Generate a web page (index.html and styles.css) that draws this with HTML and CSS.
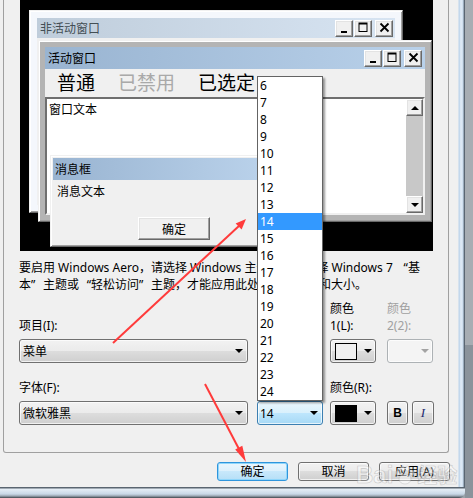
FILE: index.html
```html
<!DOCTYPE html>
<html lang="zh-CN">
<head>
<meta charset="utf-8">
<title>窗口颜色和外观</title>
<link rel="stylesheet" href="styles.css">
</head>
<body>
<div class="screen">
  <div class="window">
    <div class="client">
      <div class="panel">
        <div class="preview">
          <div class="win inactive">
            <div class="caption">
              <span class="cap-title">非活动窗口</span>
              <span class="capbtns">
                <span class="capbtn"><svg width="16" height="15" viewBox="0 0 16 15"><rect x="5" y="10" width="6" height="2"/></svg></span>
                <span class="capbtn"><svg width="16" height="15" viewBox="0 0 16 15"><path fill-rule="evenodd" d="M3.5 1.5h9v9.5h-9z M4.5 3.5v6.5h7V3.5z"/></svg></span>
                <span class="capbtn close"><svg width="16" height="15" viewBox="0 0 16 15"><path d="M4.5 2.5l8 8M12.5 2.5l-8 8" stroke="#000" stroke-width="1.8" fill="none"/></svg></span>
              </span>
            </div>
            <div class="win-body"></div>
          </div>

          <div class="win active">
            <div class="caption">
              <span class="cap-title">活动窗口</span>
              <span class="capbtns">
                <span class="capbtn"><svg width="16" height="15" viewBox="0 0 16 15"><rect x="5" y="10" width="6" height="2"/></svg></span>
                <span class="capbtn"><svg width="16" height="15" viewBox="0 0 16 15"><path fill-rule="evenodd" d="M3.5 1.5h9v9.5h-9z M4.5 3.5v6.5h7V3.5z"/></svg></span>
                <span class="capbtn close"><svg width="16" height="15" viewBox="0 0 16 15"><path d="M4.5 2.5l8 8M12.5 2.5l-8 8" stroke="#000" stroke-width="1.8" fill="none"/></svg></span>
              </span>
            </div>
            <div class="menubar">
              <span>普通</span><span class="dis">已禁用</span><span>已选定</span>
            </div>
            <div class="textarea">
              <div class="ta-text">窗口文本</div>
              <div class="vscroll">
                <div class="sbbtn"><span class="tri-up"></span></div>
                <div class="sbtrack"></div>
                <div class="sbbtn"><span class="tri-down"></span></div>
              </div>
            </div>
          </div>

          <div class="win msgbox">
            <div class="caption"><span class="cap-title">消息框</span></div>
            <div class="msg-body">
              <div class="msg-text">消息文本</div>
              <div class="msg-btn">确定</div>
            </div>
          </div>
        </div>

        <p class="note">要启用 Windows Aero，请选择 Windows 主题。仅当选择 Windows 7 <span class="q qo">“</span>基<br>本<span class="q qc">”</span>主题或<span class="q qo">“</span>轻松访问<span class="q qc">”</span>主题，才能应用此处选择的颜色和大小。</p>

        <div class="form">
          <div class="lbl">项目(I):</div>
          <div></div>
          <div class="lbl">颜色<br>1(L):</div>
          <div class="lbl dis">颜色<br>2(2):</div>

          <div class="combo aero wide"><span>菜单</span><span class="arrow"></span></div>
          <div class="combo aero narrow"><span></span><span class="arrow"></span></div>
          <div class="colorbtn aero"><span class="swatch light"></span><span class="arrow"></span></div>
          <div class="colorbtn aero disabled"><span class="swatch none"></span><span class="arrow"></span></div>

          <div class="lbl">字体(F):</div>
          <div></div>
          <div class="lbl">颜色(R):</div>
          <div></div>

          <div class="combo aero wide"><span>微软雅黑</span><span class="arrow"></span></div>
          <div class="combo aero narrow hot"><span>14</span><span class="arrow"></span></div>
          <div class="colorbtn aero"><span class="swatch dark"></span><span class="arrow"></span></div>
          <div class="style-btns">
            <div class="stybtn aero bold">B</div>
            <div class="stybtn aero ital">I</div>
          </div>
        </div>
      </div>

      <div class="buttons">
        <button class="btn aero default">确定</button>
        <button class="btn aero">取消</button>
        <button class="btn aero">应用(A)</button>
      </div>
    </div>
    <div class="frame-r"></div>
    <div class="frame-b"></div>
  </div>
  <div class="outside"></div>

  <div class="droplist">
    <div>6</div><div>7</div><div>8</div><div>9</div><div>10</div><div>11</div><div>12</div><div>13</div>
    <div class="sel">14</div>
    <div>15</div><div>16</div><div>17</div><div>18</div><div>19</div><div>20</div><div>21</div><div>22</div><div>23</div><div>24</div>
  </div>

  <div class="watermark"><span class="wm-bai">Bai</span><svg class="wm-paw" width="22" height="22" viewBox="0 0 22 22"><ellipse cx="11" cy="15" rx="6" ry="5"/><circle cx="4" cy="9" r="2.4"/><circle cx="8.5" cy="4.5" r="2.4"/><circle cx="13.5" cy="4.5" r="2.4"/><circle cx="18" cy="9" r="2.4"/></svg><span class="wm-jy">经验</span></div>

  <svg class="arrows" width="473" height="498" viewBox="0 0 473 498">
    <line x1="113" y1="343" x2="240" y2="225" stroke="#ff3b3b" stroke-width="2"/>
    <polygon points="246,219 241.6,229.5 235.6,223.4" fill="#ff3b3b"/>
    <line x1="205" y1="384" x2="240" y2="451" stroke="#ff3b3b" stroke-width="2"/>
    <polygon points="246,462 242.3,445.8 235.2,449.6" fill="#ff3b3b"/>
  </svg>
</div>
</body>
</html>
```

FILE: styles.css
```css
* { box-sizing: border-box; }
html, body { margin: 0; padding: 0; }
body {
  width: 473px;
  height: 498px;
  overflow: hidden;
  font-family: "Noto Sans", "Noto Sans CJK SC", sans-serif;
  font-size: 12px;
  color: #000;
  background: #9ba2a9;
}
.screen { position: relative; width: 473px; height: 498px; display: flex; }

.window {
  width: 465px;
  height: 498px;
  display: grid;
  grid-template-columns: 458px 7px;
  grid-template-rows: 487px 11px;
  flex: none;
}
.client { background: #f0f0f0; display: flex; flex-direction: column; }
.frame-r {
  background: linear-gradient(90deg, #f4f4f4 0, #b8d0e8 1px, #e4eef8 3px, #c8daec 5px, #6f7d8b 6px, #46505a 7px);
}
.frame-b {
  grid-column: 1 / 3;
  border-bottom-right-radius: 6px;
  background: linear-gradient(180deg, #5a6570 0, #5a6570 1px, #e6eef6 2px, #c9d8e7 7px, #9aa6b2 9px, #3e444a 11px);
}
.outside { flex: 1; background: linear-gradient(180deg, #a7adb3 0, #a7adb3 345px, #8b939b 345px); }

/* main bordered panel */
.panel {
  margin-left: 3px;
  width: 446px;
  height: 453px;
  border: 1px solid #a0a0a0;
  border-top: 0;
  border-radius: 0 0 3px 3px;
  padding-left: 15px;
}
.preview {
  margin-left: 1px;
  width: 413px;
  height: 251px;
  background: #000;
  position: relative;
  overflow: hidden;
}

/* classic preview windows */
.win {
  position: absolute;
  display: flex;
  flex-direction: column;
  border: 1px solid;
  border-color: #f0f0f0 #696969 #696969 #f0f0f0;
  box-shadow: inset 1px 1px 0 #fff, inset -1px -1px 0 #a0a0a0;
}
.inactive { left: 9px; top: 10px; width: 374px; height: 203px; padding: 7px; background: #f4f7fc; }
.active { left: 18px; top: 40px; width: 394px; height: 182px; padding: 6px; background: #b4b4b4; }
.msgbox { left: 30px; top: 155px; width: 212px; height: 92px; padding: 2px; background: #f0f0f0; }

.caption { display: flex; align-items: center; padding-left: 3px; padding-right: 2px; flex: none; }
.inactive .caption { height: 20px; background: linear-gradient(90deg, #bfcddb, #d7e4f2); color: #434e54; }
.active .caption { height: 22px; padding-right: 3px; background: linear-gradient(90deg, #99b4d1, #b9d1ea); }
.msgbox .caption { height: 22px; padding-left: 2px; background: linear-gradient(90deg, #99b4d1, #b9d1ea); }
.cap-title { flex: 1; line-height: 17px; white-space: nowrap; }
.capbtns { display: flex; }
.capbtn {
  width: 18px;
  height: 17px;
  margin-left: 1px;
  background: #f0f0f0;
  border: 1px solid;
  border-color: #fff #696969 #696969 #fff;
  box-shadow: inset -1px -1px 0 #a0a0a0, inset 1px 1px 0 #e3e3e3;
}
.capbtn.close { margin-left: 3px; }
.capbtn svg { display: block; }
.win-body { flex: 1; background: #f0f0f0; }

.menubar {
  height: 28px;
  flex: none;
  background: #f0f0f0;
  display: flex;
  align-items: center;
  gap: 23px;
  padding-left: 12px;
  font-size: 19px;
  line-height: 28px;
  white-space: nowrap;
}
.menubar .dis { color: #a9a9a9; }

.textarea {
  height: 118px;
  flex: none;
  display: flex;
  background: #fff;
  border: 2px solid;
  border-color: #6f6f6f #f0f0f0 #f0f0f0 #6f6f6f;
}
.ta-text { flex: 1; padding: 2px 0 0 2px; line-height: 17px; }
.vscroll { width: 17px; display: flex; flex-direction: column; background: #c8c8c8; }
.sbbtn {
  height: 17px;
  flex: none;
  background: #f0f0f0;
  border: 1px solid;
  border-color: #fff #696969 #696969 #fff;
  box-shadow: inset -1px -1px 0 #a0a0a0, inset 1px 1px 0 #e3e3e3;
  display: flex;
  align-items: center;
  justify-content: center;
}
.sbtrack { flex: 1; }
.tri-up { width: 0; height: 0; border-left: 4px solid transparent; border-right: 4px solid transparent; border-bottom: 4px solid #000; }
.tri-down { width: 0; height: 0; border-left: 4px solid transparent; border-right: 4px solid transparent; border-top: 4px solid #000; }

.msg-body { flex: 1; background: #f0f0f0; padding: 3px 0 0 4px; }
.msg-text { line-height: 17px; }
.msg-btn {
  margin: 17px 0 0 81px;
  width: 72px;
  height: 23px;
  background: #f0f0f0;
  border: 1px solid;
  border-color: #fff #696969 #696969 #fff;
  box-shadow: inset -1px -1px 0 #a0a0a0, inset 1px 1px 0 #e3e3e3;
  display: flex;
  align-items: center;
  justify-content: center;
}

/* note text */
.note { margin: 8px 0 0; line-height: 17px; white-space: nowrap; }
.q { display: inline-block; width: 12px; font-family: "Noto Sans", sans-serif; }
.qo { text-align: right; }
.qc { text-align: left; }

/* form grid */
.form {
  margin-top: 7px;
  display: grid;
  grid-template-columns: 238px 73px 57px 47px;
  grid-template-rows: 34px 24px 28px 24px;
  row-gap: 5px;
}
.lbl { align-self: end; line-height: 17px; white-space: nowrap; }
.lbl.dis { color: #a0a0a0; }

.aero {
  border: 1px solid #707070;
  border-radius: 3px;
  background: linear-gradient(#f2f2f2 0%, #ebebeb 49%, #dddddd 50%, #cfcfcf 100%);
  box-shadow: inset 0 0 0 1px rgba(255, 255, 255, 0.7);
}
.combo {
  height: 24px;
  display: flex;
  align-items: center;
  justify-content: space-between;
  padding: 0 4px 0 3px;
}
.combo.wide { width: 229px; }
.combo.narrow { width: 66px; padding-left: 2px; }
.combo.hot {
  border-color: #3c7fb1;
  background: linear-gradient(#eaf6fd 0%, #d9f0fc 49%, #bee6fd 50%, #a7d9f5 100%);
}
.arrow { width: 0; height: 0; border-left: 4px solid transparent; border-right: 4px solid transparent; border-top: 4px solid #000; }

.colorbtn {
  width: 46px;
  height: 24px;
  display: flex;
  align-items: center;
  justify-content: space-between;
  padding: 0 3px 0 4px;
}
.swatch { width: 22px; height: 17px; border: 1px solid #000; }
.swatch.light { background: #f0f0f0; }
.swatch.dark { background: #000; }
.swatch.none { border: 0; }
.colorbtn.disabled { border-color: #adb2b5; background: #f4f4f4; }
.colorbtn.disabled .arrow { border-top-color: #a3a3a3; }

.style-btns { display: flex; gap: 4px; }
.stybtn {
  width: 21px;
  height: 24px;
  display: flex;
  align-items: center;
  justify-content: center;
  font-family: "Liberation Sans", sans-serif;
  font-size: 12px;
}
.stybtn.bold { font-weight: bold; }
.stybtn.ital { width: 22px; font-family: "Liberation Serif", serif; font-style: italic; font-size: 13px; color: #1c2a70; }

/* bottom buttons */
.buttons { display: flex; justify-content: flex-end; gap: 10px; padding-right: 8px; margin-top: 9px; }
.btn {
  width: 71px;
  height: 19px;
  padding: 0;
  font: inherit;
  color: #000;
  display: flex;
  align-items: center;
  justify-content: center;
  line-height: 17px;
}
.btn.default {
  border-color: #2f95dc;
  background: linear-gradient(#eaf6fd 0%, #dcf0fc 49%, #c8e8fb 50%, #b6dff7 100%);
  box-shadow: inset 0 0 0 1px #8fd6fb;
}

/* dropdown list overlay */
.droplist {
  position: absolute;
  left: 257px;
  top: 76px;
  width: 66px;
  border: 1px solid #646464;
  background: #fff;
  box-shadow: 2px 2px 2px rgba(0, 0, 0, 0.4);
}
.droplist div { height: 17px; line-height: 17px; padding-left: 2px; }
.droplist .sel { background: #3399ff; color: #fff; }

/* watermark */
.watermark {
  position: absolute;
  left: 356px;
  top: 460px;
  display: flex;
  align-items: center;
  gap: 1px;
  opacity: 0.45;
  color: #fff;
  pointer-events: none;
}
.wm-bai { font-family: "Liberation Sans", sans-serif; font-size: 24px; font-weight: bold; -webkit-text-stroke: 0.6px #999; }
.wm-jy { font-size: 20px; font-weight: bold; -webkit-text-stroke: 0.6px #999; }
.wm-paw { fill: #fff; stroke: #999; stroke-width: 0.6; }

.arrows { position: absolute; left: 0; top: 0; pointer-events: none; }
```
